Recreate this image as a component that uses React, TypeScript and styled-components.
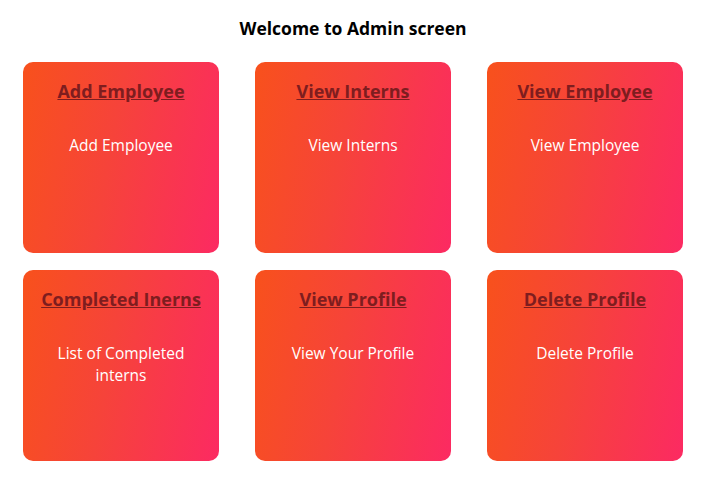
import styled, { createGlobalStyle } from "styled-components";

const GlobalStyle = createGlobalStyle`
  body {
    margin: 0;
    background: #ffffff;
    font-family: "Open Sans", "Noto Sans", sans-serif;
  }
`;

const Page = styled.div`
  display: flex;
  flex-direction: column;
  align-items: center;
  padding: 14px 26px 0 23px;
`;

const Heading = styled.h2`
  margin: 0 0 20px;
  font-size: 17.5px;
  font-weight: 700;
  color: #000;
  line-height: 28px;
`;

const Grid = styled.div`
  display: grid;
  grid-template-columns: repeat(3, 196px);
  column-gap: 36px;
  row-gap: 17px;
`;

const Card = styled.div`
  height: 191px;
  border-radius: 10px;
  background: linear-gradient(100deg, #f8511c 0%, #f6433a 45%, #fc2a62 100%);
  display: flex;
  flex-direction: column;
  align-items: center;
  padding: 16px 14px 0;
  box-sizing: border-box;
  text-align: center;
`;

const CardTitle = styled.a`
  font-size: 18px;
  font-weight: 700;
  color: #7e1d1f;
  text-decoration: underline;
  line-height: 26px;
`;

const CardText = styled.p`
  margin: 30px 0 0;
  font-size: 15.5px;
  color: #ffffff;
  line-height: 22px;
`;

const cards = [
  { title: "Add Employee", text: "Add Employee" },
  { title: "View Interns", text: "View Interns" },
  { title: "View Employee", text: "View Employee" },
  { title: "Completed Inerns", text: "List of Completed interns" },
  { title: "View Profile", text: "View Your Profile" },
  { title: "Delete Profile", text: "Delete Profile" },
];

export default function App() {
  return (
    <>
      <GlobalStyle />
      <Page>
        <Heading>Welcome to Admin screen</Heading>
        <Grid>
          {cards.map((c) => (
            <Card key={c.title}>
              <CardTitle>{c.title}</CardTitle>
              <CardText>{c.text}</CardText>
            </Card>
          ))}
        </Grid>
      </Page>
    </>
  );
}
